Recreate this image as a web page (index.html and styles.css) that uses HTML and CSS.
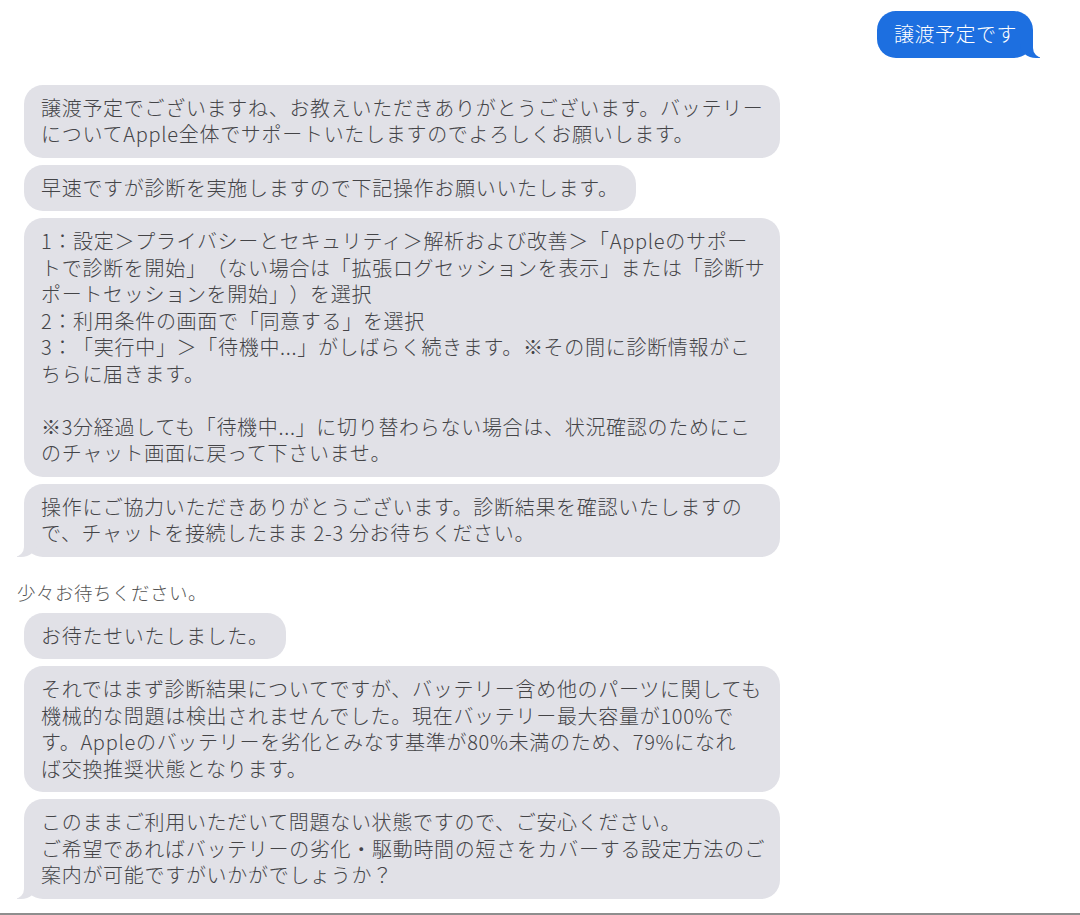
FILE: index.html
```html
<!DOCTYPE html>
<html lang="ja">

<head>
  <meta charset="UTF-8">
  <meta name="viewport" content="width=device-width, initial-scale=1.0">
  <title>チャット</title>
  <link rel="stylesheet" href="styles.css">
</head>

<body>
  <div class="screen">
    <div class="thread">

      <div class="bubble sent tail">譲渡予定です</div>

      <div class="bubble wide first">譲渡予定でございますね、お教えいただきありがとうございます。バッテリー<br>についてApple全体でサポートいたしますのでよろしくお願いします。</div>
      <div class="bubble">早速ですが診断を実施しますので下記操作お願いいたします。</div>
      <div class="bubble wide">1：設定＞プライバシーとセキュリティ＞解析および改善＞「Appleのサポー<br>トで診断を開始」（ない場合は「拡張ログセッションを表示」または「診断サ<br>ポートセッションを開始」）を選択<br>2：利用条件の画面で「同意する」を選択<br>3：「実行中」＞「待機中...」がしばらく続きます。※その間に診断情報がこ<br>ちらに届きます。<br><br>※3分経過しても「待機中...」に切り替わらない場合は、状況確認のためにこ<br>のチャット画面に戻って下さいませ。</div>
      <div class="bubble wide tail">操作にご協力いただきありがとうございます。診断結果を確認いたしますの<br>で、チャットを接続したまま 2-3 分お待ちください。</div>

      <div class="note">少々お待ちください。</div>

      <div class="bubble">お待たせいたしました。</div>
      <div class="bubble wide">それではまず診断結果についてですが、バッテリー含め他のパーツに関しても<br>機械的な問題は検出されませんでした。現在バッテリー最大容量が100%で<br>す。Appleのバッテリーを劣化とみなす基準が80%未満のため、79%になれ<br>ば交換推奨状態となります。</div>
      <div class="bubble wide tail">このままご利用いただいて問題ない状態ですので、ご安心ください。<br>ご希望であればバッテリーの劣化・駆動時間の短さをカバーする設定方法のご<br>案内が可能ですがいかがでしょうか？</div>

    </div>
    <div class="bar"></div>
  </div>
</body>

</html>
```

FILE: styles.css
```css
body {
  margin: 0;
  background: #fff;
  font-family: 'Noto Sans CJK JP', 'Noto Sans', sans-serif;
  font-weight: 300;
  color: #444447;
  text-spacing-trim: space-all;
}

.screen {
  height: 100vh;
  display: flex;
  flex-direction: column;
}

.thread {
  flex: 1;
  display: flex;
  flex-direction: column;
  align-items: flex-start;
  gap: 7px;
  padding: 11px 0 0 24px;
}

.bubble {
  position: relative;
  padding: 10px 17px;
  border-radius: 19px;
  background: #e1e1e7;
  font-size: 20px;
  line-height: 26.5px;
  letter-spacing: 0.7px;
  white-space: nowrap;
}

/* bubbles that wrap fill the max width */
.wide {
  box-sizing: border-box;
  width: 756px;
}

.first {
  margin-top: 20px;
}

/* iMessage style tail */
.tail::before,
.tail::after {
  content: "";
  position: absolute;
  bottom: 0;
  height: 22px;
}

.tail::before {
  left: -7px;
  width: 20px;
  background: #e1e1e7;
  border-bottom-right-radius: 16px 14px;
}

.tail::after {
  left: -26px;
  width: 26px;
  background: #fff;
  border-bottom-right-radius: 10px;
}

.sent {
  align-self: flex-end;
  margin-right: 47px;
  padding: 10px 16px 10px 17px;
  background: #1d6fe0;
  color: #fff;
  letter-spacing: 0.5px;
}

.sent.tail::before {
  left: auto;
  right: -7px;
  background: #1d6fe0;
  border-bottom-right-radius: 0;
  border-bottom-left-radius: 16px 14px;
}

.sent.tail::after {
  left: auto;
  right: -26px;
  border-bottom-right-radius: 0;
  border-bottom-left-radius: 10px;
}

.note {
  margin: 16px 0 2px -7px;
  font-size: 18.5px;
  line-height: 24px;
  letter-spacing: 0.5px;
  color: #555;
}

.bar {
  height: 2px;
  background: #8e8e8e;
}
```
